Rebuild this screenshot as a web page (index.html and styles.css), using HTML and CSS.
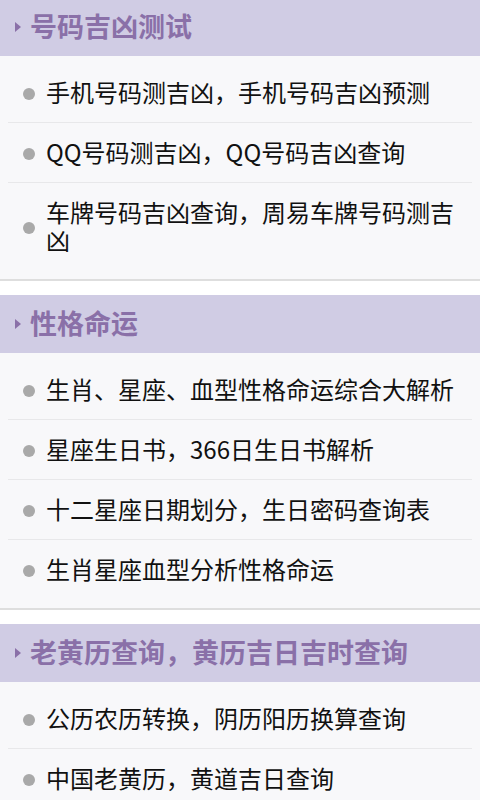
FILE: index.html
```html
<!DOCTYPE html>
<html lang="zh">
<head>
<meta charset="utf-8">
<link rel="stylesheet" href="styles.css">
</head>
<body>
<div class="page">
  <section class="sec">
    <h2 class="head"><span class="tri"></span>号码吉凶测试</h2>
    <ul class="list">
      <li class="item">手机号码测吉凶，手机号码吉凶预测</li>
      <li class="item">QQ号码测吉凶，QQ号码吉凶查询</li>
      <li class="item">车牌号码吉凶查询，周易车牌号码测吉凶</li>
    </ul>
  </section>
  <section class="sec">
    <h2 class="head"><span class="tri"></span>性格命运</h2>
    <ul class="list">
      <li class="item">生肖、星座、血型性格命运综合大解析</li>
      <li class="item">星座生日书，366日生日书解析</li>
      <li class="item">十二星座日期划分，生日密码查询表</li>
      <li class="item">生肖星座血型分析性格命运</li>
    </ul>
  </section>
  <section class="sec">
    <h2 class="head"><span class="tri"></span>老黄历查询，黄历吉日吉时查询</h2>
    <ul class="list">
      <li class="item">公历农历转换，阴历阳历换算查询</li>
      <li class="item">中国老黄历，黄道吉日查询</li>
    </ul>
  </section>
</div>
</body>
</html>
```

FILE: styles.css
```css
html, body {
  margin: 0;
  padding: 0;
  background: #ffffff;
}
body {
  font-family: "Noto Sans CJK SC", "Noto Sans", sans-serif;
  overflow: hidden;
}
.page {
  margin-top: -2px;
  display: flex;
  flex-direction: column;
  gap: 14px;
}
.head {
  margin: 0;
  height: 58px;
  display: flex;
  align-items: center;
  gap: 9px;
  padding-left: 15px;
  padding-bottom: 3px;
  box-sizing: border-box;
  background: #d0cce4;
  color: #8a70a8;
  font-size: 27px;
  font-weight: bold;
  line-height: 1;
}
.tri {
  width: 0;
  height: 0;
  border-top: 5px solid transparent;
  border-bottom: 5px solid transparent;
  border-left: 6px solid #8a70a8;
  margin-top: 3px;
}
.list {
  list-style: none;
  margin: 0;
  padding: 7px 8px 8px;
  background: #f8f8fa;
  border-bottom: 2px solid #dedede;
}
.item {
  position: relative;
  padding: 15px 0 16px 38px;
  font-size: 24px;
  line-height: 28px;
  color: #111111;
  border-bottom: 1px solid #e8e8ea;
}
.item:last-child {
  border-bottom: none;
  padding-bottom: 17px;
}
.item::before {
  content: "";
  position: absolute;
  left: 15px;
  top: 50%;
  width: 12px;
  height: 12px;
  margin-top: -5px;
  border-radius: 50%;
  background: #a9a9a9;
}
```
